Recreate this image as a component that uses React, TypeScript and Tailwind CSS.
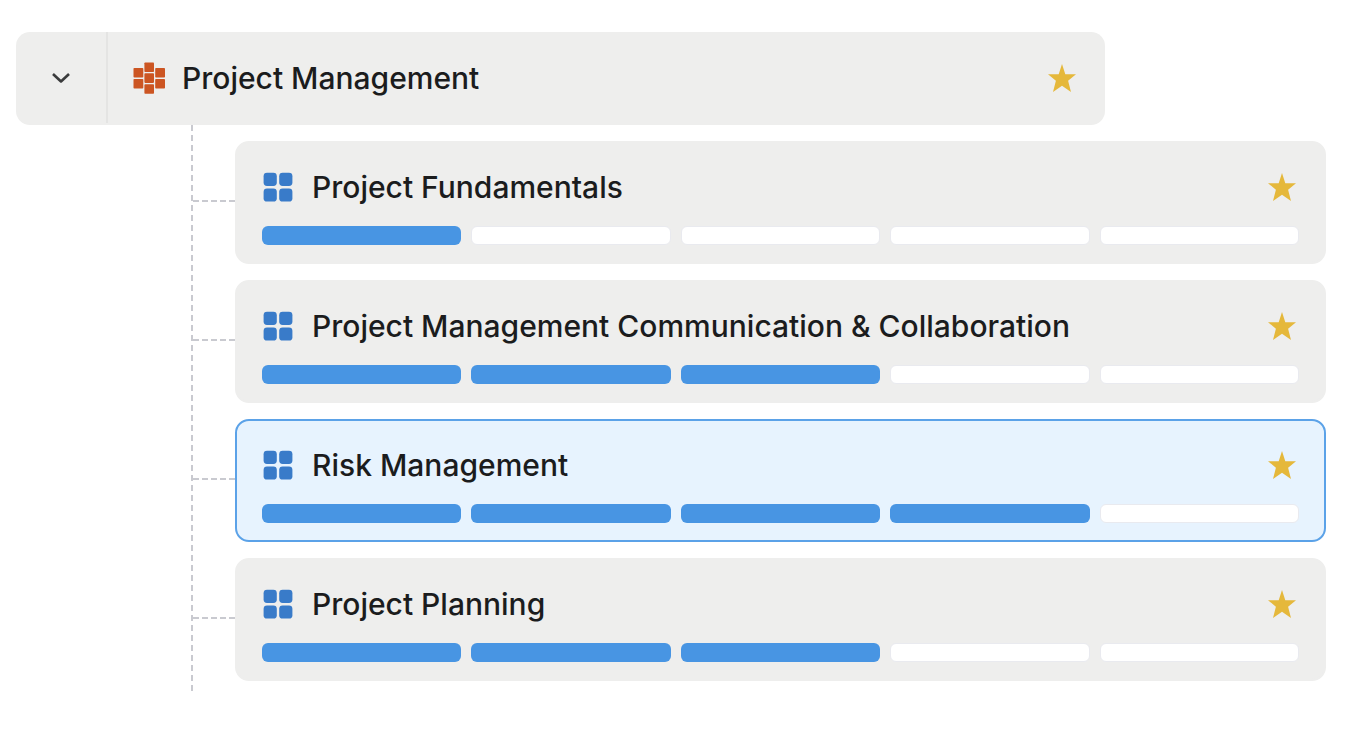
interface Skill {
  title: string;
  level: number;
  selected?: boolean;
}

const MAX_LEVEL = 5;

const skills: Skill[] = [
  { title: 'Project Fundamentals', level: 1 },
  { title: 'Project Management Communication & Collaboration', level: 3 },
  { title: 'Risk Management', level: 4, selected: true },
  { title: 'Project Planning', level: 3 },
];

const ChevronIcon = () => (
  <svg viewBox="0 0 20 20" className="size-5" fill="none" stroke="#3a3b3c" strokeWidth="2.6" strokeLinejoin="round" aria-hidden="true">
    <path d="M2 6 L10 13.5 L18 6" />
  </svg>
);

const CategoryIcon = () => (
  <svg viewBox="0 0 32 32" className="size-8 shrink-0" fill="#cc5522" aria-hidden="true">
    <rect x="0.5" y="6" width="9.8" height="9.6" rx="0.8" />
    <rect x="0.5" y="17" width="9.8" height="9.6" rx="0.8" />
    <rect x="11.4" y="0.4" width="9.6" height="9.6" rx="0.8" />
    <rect x="11.4" y="11.3" width="9.6" height="9.6" rx="0.8" />
    <rect x="11.4" y="22.2" width="9.6" height="9.6" rx="0.8" />
    <rect x="22.2" y="6" width="9.8" height="9.6" rx="0.8" />
    <rect x="22.2" y="17" width="9.8" height="9.6" rx="0.8" />
  </svg>
);

const SkillIcon = () => (
  <svg viewBox="0 0 32 32" className="size-8 shrink-0" fill="#397bc9" aria-hidden="true">
    <rect x="1.6" y="1.8" width="13.2" height="13.2" rx="3.4" />
    <rect x="17.2" y="1.8" width="13.2" height="13.2" rx="3.4" />
    <rect x="1.6" y="17.4" width="13.2" height="13.2" rx="3.4" />
    <rect x="17.2" y="17.4" width="13.2" height="13.2" rx="3.4" />
  </svg>
);

const StarButton = ({ title }: { title: string }) => (
  <button type="button" aria-label={`Favorite ${title}`} className="shrink-0 cursor-pointer">
    <svg viewBox="0 0 28 28" className="size-7" fill="#e5b83b" aria-hidden="true">
      <path d="M14 0 L17.3 10.2 H28 L20.1 16.8 L23 28 L14 21.8 L5 28 L7.9 16.8 L0 10.2 H10.7 Z" />
    </svg>
  </button>
);

const LevelBar = ({ title, level }: { title: string; level: number }) => (
  <div
    role="meter"
    aria-label={`${title} level`}
    aria-valuemin={0}
    aria-valuemax={MAX_LEVEL}
    aria-valuenow={level}
    className="mt-[19px] grid grid-cols-5 gap-[10px]"
  >
    {Array.from({ length: MAX_LEVEL }, (_, i) => (
      <div
        key={i}
        className={
          i < level
            ? 'h-[19px] rounded-md bg-[#4895e3]'
            : 'h-[19px] rounded-md border border-[#e9eaef] bg-white'
        }
      />
    ))}
  </div>
);

const SkillCard = ({ title, level, selected }: Skill) => (
  <li className="flex items-center">
    <div className="mb-1 w-[42px] shrink-0 border-t-2 border-dashed border-[#c9cad0]" />
    <article
      className={`min-w-0 flex-1 rounded-[14px] border-2 px-[25px] pt-6 pb-[17px] ${
        selected ? 'border-[#5ba2e8] bg-[#e7f3fe]' : 'border-[#eeeeed] bg-[#eeeeed]'
      }`}
    >
      <div className="flex h-10 items-center pr-[3px]">
        <SkillIcon />
        <h3 className="ml-[18px] flex-1 text-[30px] leading-10 font-medium">{title}</h3>
        <StarButton title={title} />
      </div>
      <LevelBar title={title} level={level} />
    </article>
  </li>
);

export default function App() {
  return (
    <main className="min-h-screen bg-white pt-8 pr-[26px] pb-12 pl-4 font-['Inter',sans-serif] text-[#1b1c1d]">
      <header className="mr-[221px] flex h-[93px] items-stretch rounded-[14px] bg-[#eeeeed] pb-0.5">
        <button
          type="button"
          aria-label="Collapse Project Management"
          aria-expanded="true"
          className="flex w-[92px] shrink-0 cursor-pointer items-center justify-center border-r-2 border-[#e4e4e3]"
        >
          <ChevronIcon />
        </button>
        <div className="flex flex-1 items-center pr-[29px] pl-[25px]">
          <CategoryIcon />
          <h2 className="ml-[17px] flex-1 text-[30px] leading-10 font-medium">Project Management</h2>
          <StarButton title="Project Management" />
        </div>
      </header>
      <ul className="ml-[175px] flex flex-col gap-4 border-l-2 border-dashed border-[#c9cad0] pt-4 pb-[10px]">
        {skills.map((skill) => (
          <SkillCard key={skill.title} {...skill} />
        ))}
      </ul>
    </main>
  );
}
